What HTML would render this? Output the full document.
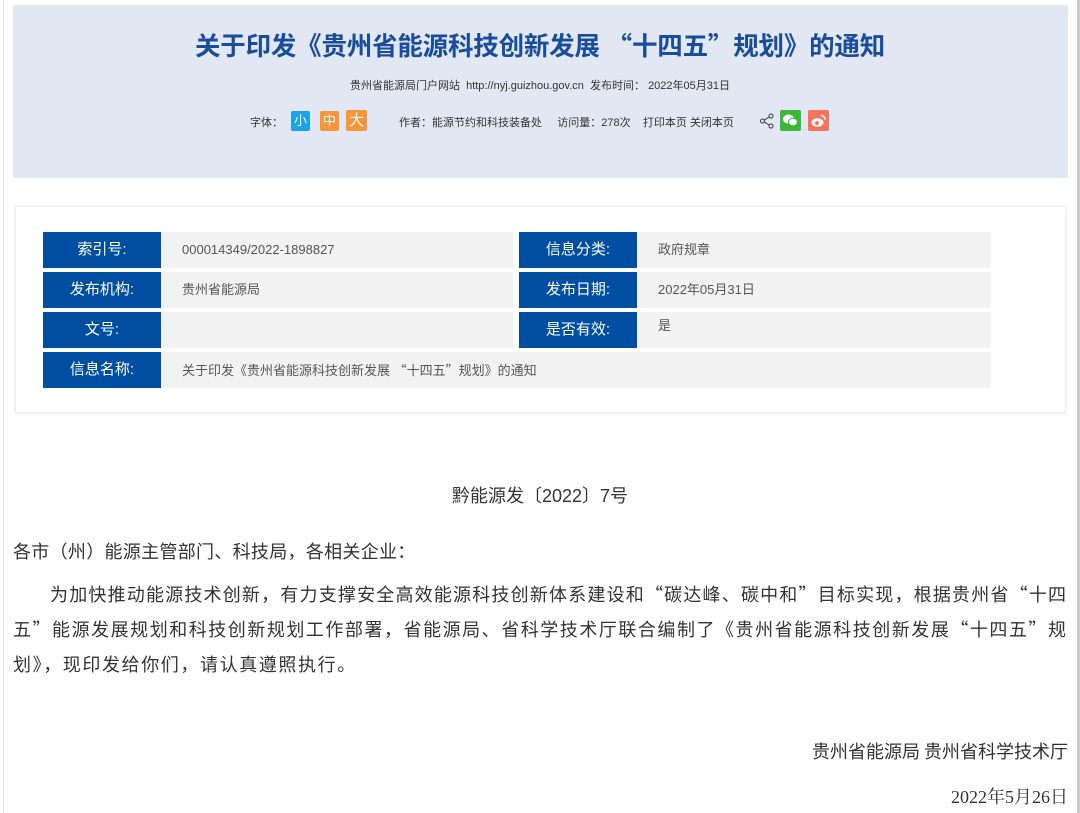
<!DOCTYPE html>
<html><head><meta charset="utf-8"><style>
*{margin:0;padding:0;box-sizing:border-box}
body{width:1080px;height:813px;background:#fff;position:relative;overflow:hidden;font-family:"Liberation Sans","Noto Sans CJK SC",sans-serif;color:#333}
.a{position:absolute;white-space:nowrap}
.q{font-family:"Noto Sans CJK SC",sans-serif}
.lb{position:absolute;background:#004ea2;color:#fff;font-size:15px;text-align:center;line-height:36px;height:36px;width:118px}
.lb:after{content:"";position:absolute;right:-5px;top:13px;border-left:5px solid #004ea2;border-top:5px solid transparent;border-bottom:5px solid transparent}
.vl{position:absolute;background:#f2f2f2;color:#555;font-size:13px;line-height:36px;height:36px;padding-left:21px}
.b{position:absolute;font-size:18px;color:#333;white-space:nowrap}
.ln{position:absolute;font-size:18px;color:#333;white-space:nowrap;font-family:"Noto Sans CJK SC",sans-serif;text-align:justify;text-align-last:justify;line-height:24px}
</style></head><body>
<div class="a" style="left:3px;top:0;width:1px;height:813px;background:#ddd"></div>
<div class="a" style="left:1077px;top:0;width:3px;height:813px;background:#ccc"></div>
<div class="a" style="left:13px;top:5px;width:1055px;height:173px;background:#e1e7f3"></div>
<div class="a" style="left:0;width:1080px;top:28px;text-align:center;font-size:25.5px;font-weight:bold;color:#1a4c9c;line-height:34px;letter-spacing:-0.2px">关于印发《贵州省能源科技创新发展 <span class="q">“</span>十四五<span class="q">”</span>规划》的通知</div>
<div class="a" style="left:0;width:1080px;top:77px;text-align:center;font-size:11px;color:#333">贵州省能源局门户网站&nbsp; http://nyj.guizhou.gov.cn&nbsp; 发布时间： 2022年05月31日</div>
<div class="a" style="left:250px;top:114px;font-size:11px;color:#333">字体：</div>
<div class="a" style="left:291px;top:111px;width:19px;height:20px;background:#1aa3e8;color:#fff;font-size:13px;text-align:center;line-height:20px;border-radius:2px">小</div>
<div class="a" style="left:320px;top:111px;width:19px;height:20px;background:#f7953a;color:#fff;font-size:13px;text-align:center;line-height:20px;border-radius:2px">中</div>
<div class="a" style="left:346px;top:110px;width:21px;height:21px;background:#f7953a;color:#fff;font-size:15px;text-align:center;line-height:21px;border-radius:2px">大</div>
<div class="a" style="left:399px;top:114px;font-size:11px;color:#333">作者：能源节约和科技装备处&nbsp;&nbsp;&nbsp;&nbsp; 访问量：278次&nbsp;&nbsp;&nbsp; 打印本页 关闭本页</div>
<svg class="a" style="left:759px;top:113px" width="16" height="16" viewBox="0 0 16 16"><g fill="none" stroke="#555" stroke-width="1.2"><circle cx="12" cy="3" r="2"/><circle cx="3.5" cy="8" r="2"/><circle cx="12" cy="13" r="2"/><path d="M5.3 7 10.2 4M5.3 9 10.2 12"/></g></svg>
<div class="a" style="left:780px;top:110px;width:21px;height:21px;background:#3bb837;border-radius:2px"><svg width="21" height="21" viewBox="0 0 21 21"><ellipse cx="8.5" cy="9" rx="5.5" ry="4.5" fill="#fff"/><ellipse cx="13" cy="12" rx="4.5" ry="3.8" fill="#fff" stroke="#3bb837" stroke-width="1"/></svg></div>
<div class="a" style="left:808px;top:110px;width:21px;height:21px;background:#f5735f;border-radius:2px"><svg width="21" height="21" viewBox="0 0 21 21"><ellipse cx="9.5" cy="12.5" rx="6" ry="4.3" fill="#fff"/><circle cx="9" cy="13" r="2" fill="#f5735f"/><path d="M13 5.5a4 4 0 0 1 4 4" stroke="#fff" stroke-width="1.5" fill="none"/></svg></div>

<div class="a" style="left:15px;top:206px;width:1051px;height:207px;border:1px solid #eee;box-shadow:0 1px 3px rgba(0,0,0,.08)"></div>
<div class="lb" style="left:43px;top:232px">索引号:</div><div class="vl" style="left:161px;top:232px;width:352px">000014349/2022-1898827</div>
<div class="lb" style="left:519px;top:232px">信息分类:</div><div class="vl" style="left:637px;top:232px;width:354px">政府规章</div>
<div class="lb" style="left:43px;top:272px">发布机构:</div><div class="vl" style="left:161px;top:272px;width:352px">贵州省能源局</div>
<div class="lb" style="left:519px;top:272px">发布日期:</div><div class="vl" style="left:637px;top:272px;width:354px">2022年05月31日</div>
<div class="lb" style="left:43px;top:312px">文号:</div><div class="vl" style="left:161px;top:312px;width:352px"></div>
<div class="lb" style="left:519px;top:312px">是否有效:</div><div class="vl" style="left:637px;top:312px;width:354px;line-height:28px">是</div>
<div class="lb" style="left:43px;top:352px">信息名称:</div><div class="vl" style="left:161px;top:352px;width:830px">关于印发《贵州省能源科技创新发展 <span class="q">“</span>十四五<span class="q">”</span>规划》的通知</div>

<div class="b" style="left:0;width:1080px;text-align:center;top:482px">黔能源发〔2022〕7号</div>
<div class="ln" style="left:13px;top:539px;letter-spacing:0.3px">各市（州）能源主管部门、科技局，各相关企业：</div>
<div class="ln" style="left:50px;width:1016px;top:582px">为加快推动能源技术创新，有力支撑安全高效能源科技创新体系建设和“碳达峰、碳中和”目标实现，根据贵州省“十四</div>
<div class="ln" style="left:13px;width:1053px;top:617px">五”能源发展规划和科技创新规划工作部署，省能源局、省科学技术厅联合编制了《贵州省能源科技创新发展“十四五”规</div>
<div class="ln" style="left:13px;top:652px;letter-spacing:1.6px">划》，现印发给你们，请认真遵照执行。</div>
<div class="ln" style="right:12px;top:739px">贵州省能源局 贵州省科学技术厅</div>
<div class="b" style="right:12px;top:783px;font-family:'Liberation Serif','Noto Serif CJK SC',serif">2022年5月26日</div>
</body></html>
